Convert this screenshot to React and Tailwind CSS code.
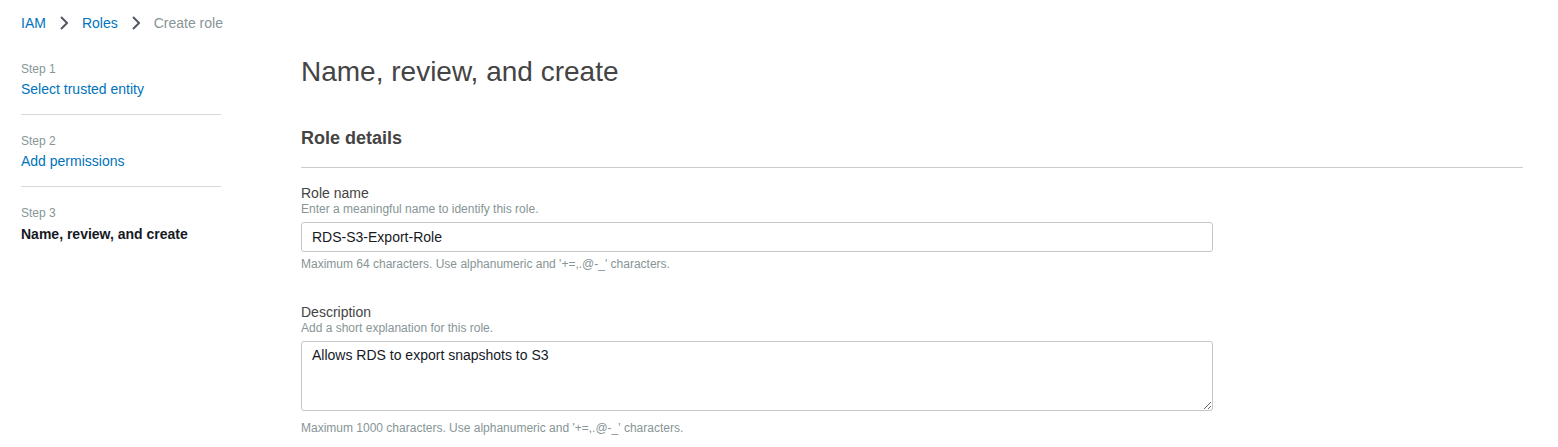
const Chevron = () => (
  <svg width="8" height="16" viewBox="0 0 8 16" className="shrink-0">
    <polyline
      points="1,2 7,8 1,14"
      fill="none"
      stroke="#545b64"
      strokeWidth="2"
    />
  </svg>
);

const steps = [
  { label: "Step 1", title: "Select trusted entity", current: false },
  { label: "Step 2", title: "Add permissions", current: false },
  { label: "Step 3", title: "Name, review, and create", current: true },
];

const App = () => {
  return (
    <div
      className="min-h-[447px] bg-white px-[21px] text-[#444]"
      style={{ fontFamily: '"Liberation Sans", Arial, sans-serif' }}
    >
      <nav className="flex items-center gap-[14px] pt-[13px] text-[14px] leading-[20px]">
        <a className="text-[#0073bb]">IAM</a>
        <Chevron />
        <a className="text-[#0073bb]">Roles</a>
        <Chevron />
        <span className="text-[#879596]">Create role</span>
      </nav>

      <div className="flex mt-[26px]">
        <aside className="w-[200px] shrink-0">
          {steps.map((step, index) => (
            <div
              key={index}
              className={
                index < steps.length - 1
                  ? "pb-[15px] mb-[16px] border-b border-[#d5dbdb]"
                  : ""
              }
            >
              <div className="text-[12px] leading-[20px] text-[#879596]">
                {step.label}
              </div>
              <div
                className={
                  step.current
                    ? "mt-px text-[14px] leading-[20px] font-bold text-[#16191f]"
                    : "text-[14px] leading-[20px] text-[#0073bb]"
                }
              >
                {step.title}
              </div>
            </div>
          ))}
        </aside>

        <main className="flex-1 ml-[80px] pr-[14px] -mt-[5px]">
          <h1 className="text-[28px] leading-[36px] font-normal text-[#444]">
            Name, review, and create
          </h1>

          <h2 className="mt-[36px] text-[18px] leading-[24px] font-bold text-[#444]">
            Role details
          </h2>
          <div className="mt-[17px] border-b border-[#cccccc]" />

          <div className="mt-[16px]">
            <label className="block text-[14px] leading-[18px] text-[#444]">
              Role name
            </label>
            <div className="text-[12px] leading-[14px] text-[#879596]">
              Enter a meaningful name to identify this role.
            </div>
            <input
              type="text"
              defaultValue="RDS-S3-Export-Role"
              className="block mt-[6px] w-[912px] h-[30px] px-[10px] border border-[#c6c6c6] rounded-[3px] text-[14px] text-[#16191f] outline-none"
            />
            <div className="mt-[4px] text-[12px] leading-[16px] text-[#879596]">
              Maximum 64 characters. Use alphanumeric and '+=,.@-_' characters.
            </div>
          </div>

          <div className="mt-[31px]">
            <label className="block text-[14px] leading-[18px] text-[#444]">
              Description
            </label>
            <div className="text-[12px] leading-[14px] text-[#879596]">
              Add a short explanation for this role.
            </div>
            <textarea
              defaultValue="Allows RDS to export snapshots to S3"
              className="block mt-[6px] w-[912px] h-[70px] px-[10px] py-[4px] border border-[#c6c6c6] rounded-[3px] text-[14px] leading-[18px] text-[#16191f] outline-none"
            />
            <div className="mt-[9px] text-[12px] leading-[16px] text-[#879596]">
              Maximum 1000 characters. Use alphanumeric and '+=,.@-_' characters.
            </div>
          </div>
        </main>
      </div>
    </div>
  );
};

export default App;
